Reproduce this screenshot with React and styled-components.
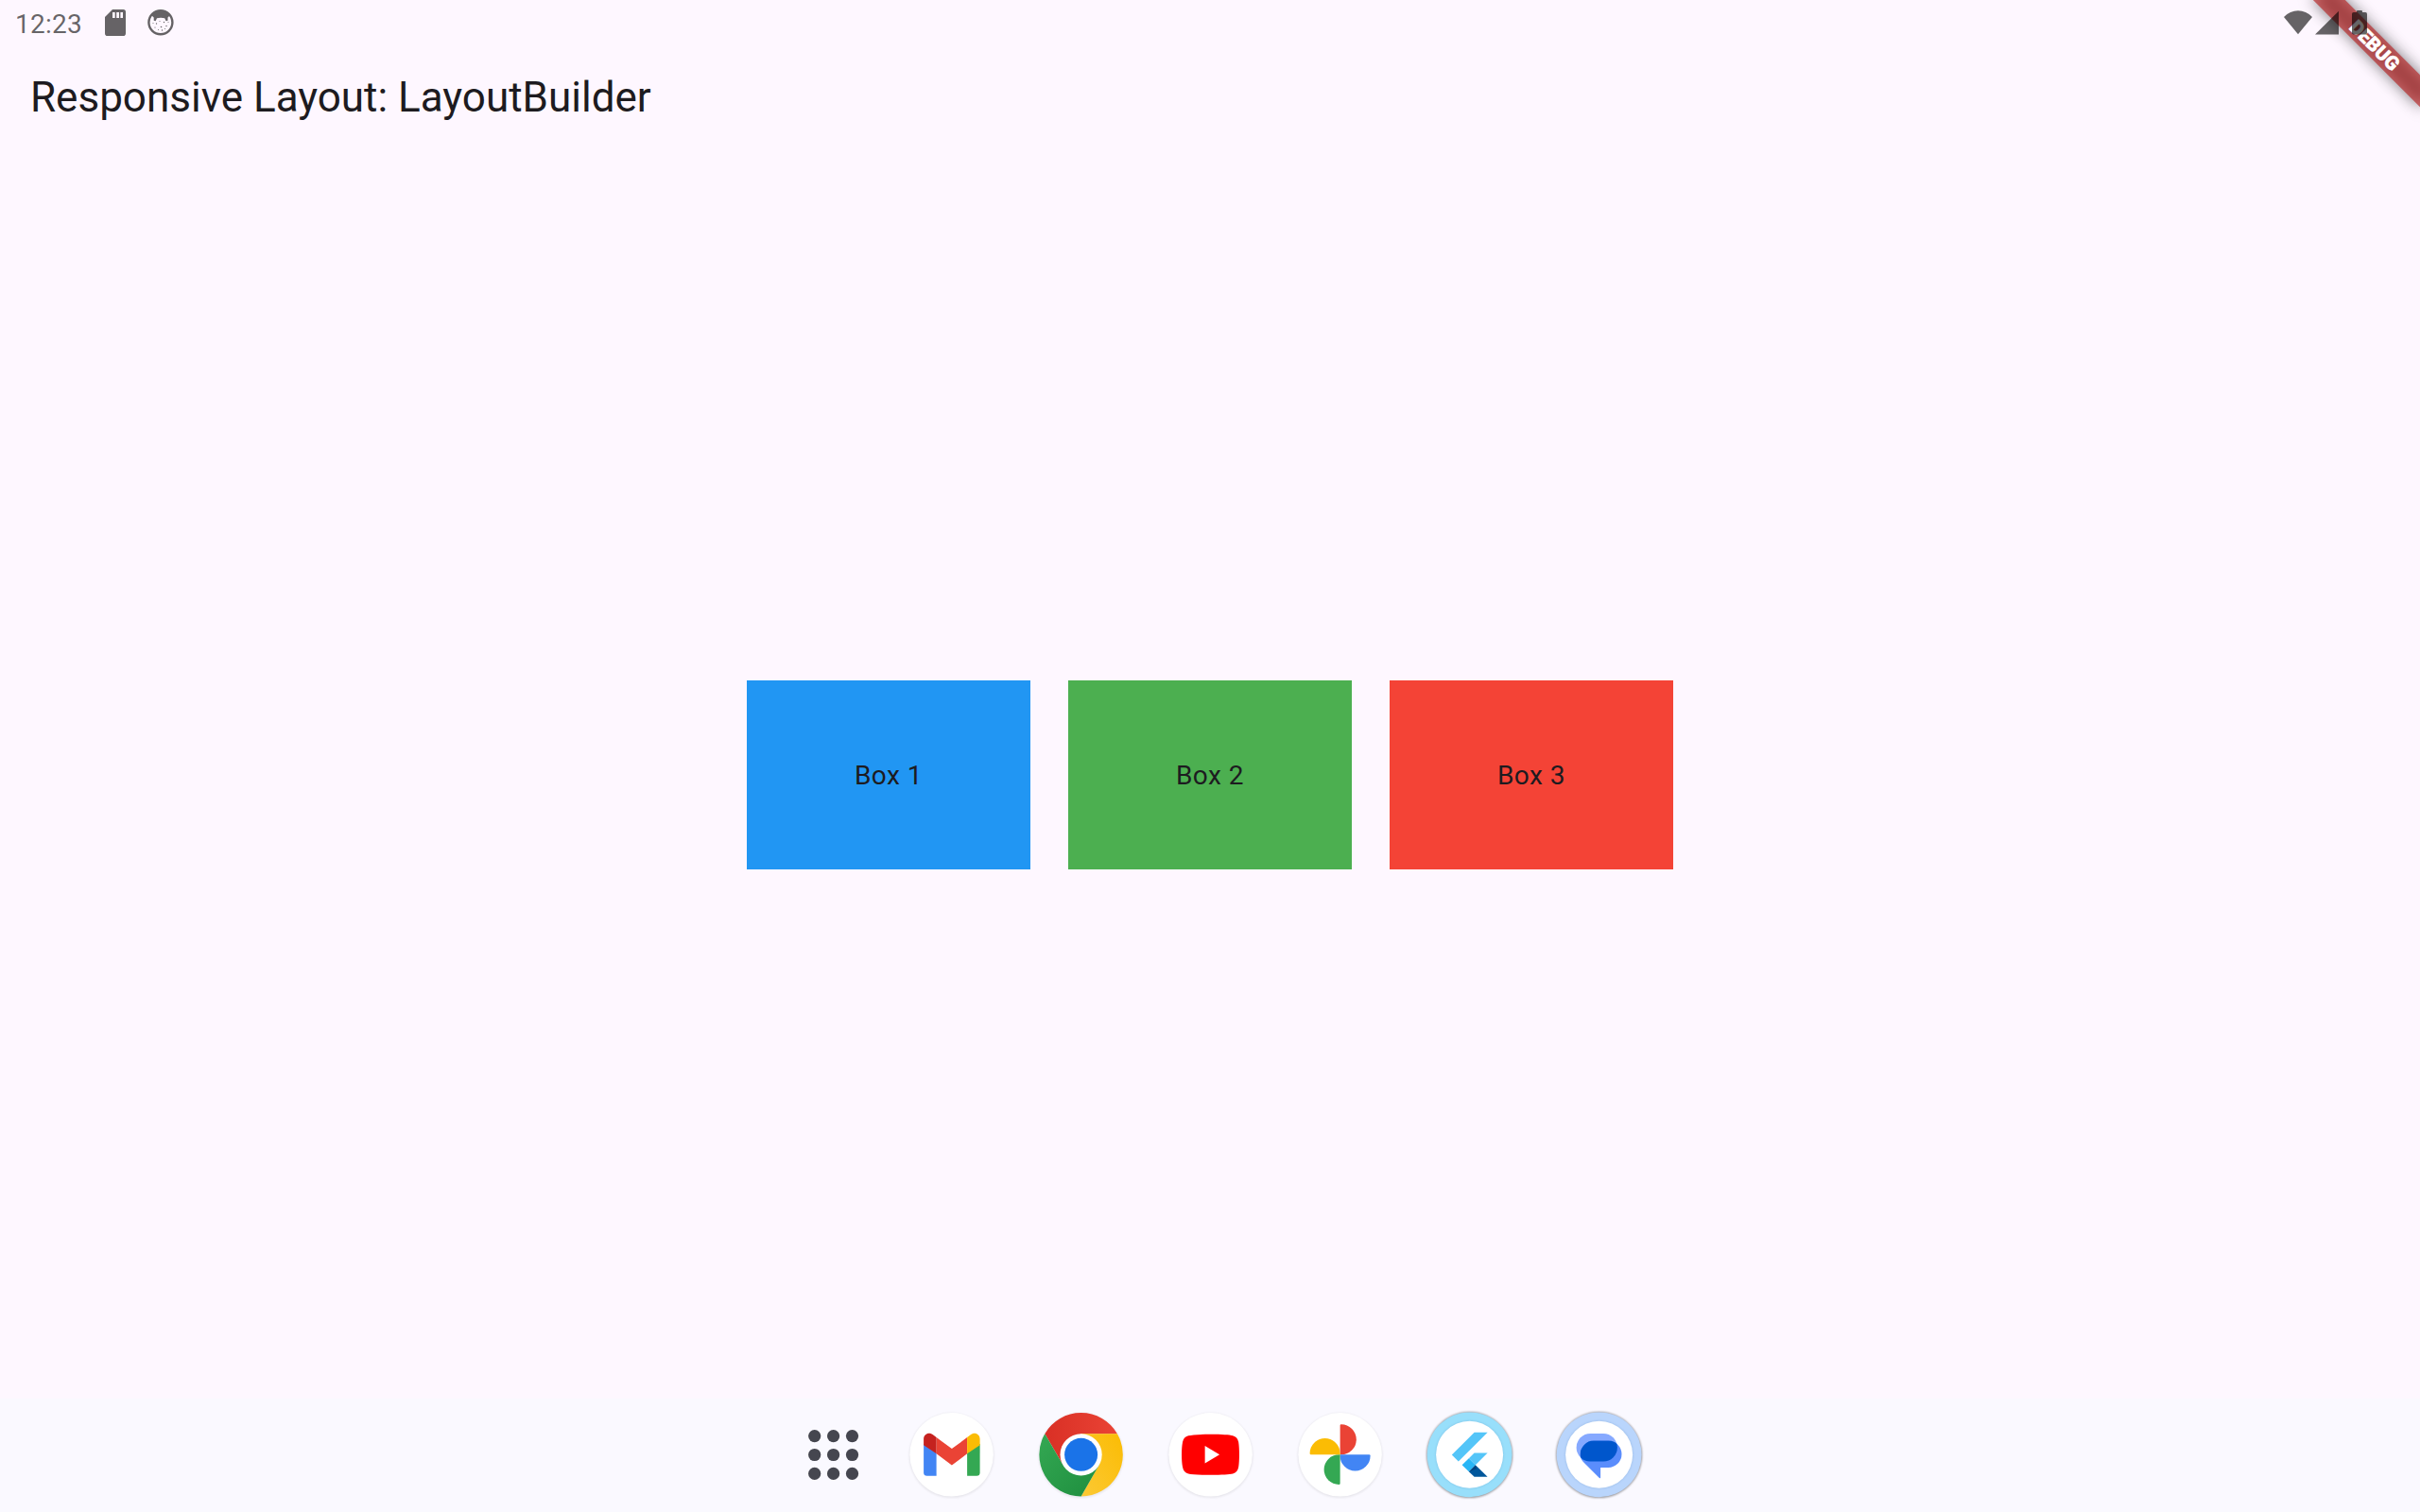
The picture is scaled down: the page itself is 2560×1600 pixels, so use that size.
import React from "react";
import styled, { createGlobalStyle } from "styled-components";

const ink = "rgba(0, 0, 0, 0.6)";

const GlobalStyle = createGlobalStyle`
  *, *::before, *::after { box-sizing: border-box; }
  html, body { margin: 0; padding: 0; overflow: hidden; }
  body { font-family: Roboto, "Liberation Sans", sans-serif; }
  svg { display: block; flex: none; }
`;

const Screen = styled.div`
  position: relative;
  display: flex;
  flex-direction: column;
  width: 2560px;
  height: 1600px;
  overflow: hidden;
  background: #fef7ff;
  color: #1d1b20;
`;

const StatusBar = styled.header`
  position: relative;
  z-index: 2;
  display: flex;
  justify-content: space-between;
  height: 48px;
  padding: 0 56px 0 16px;
`;

const StatusGroup = styled.div`
  display: flex;
  align-items: flex-start;
`;

const Clock = styled.time`
  width: 94px;
  padding-top: 9px;
  font-size: 28px;
  line-height: 33px;
  letter-spacing: 0.25px;
  color: ${ink};
`;

const AppBar = styled.div`
  display: flex;
  align-items: center;
  height: 112px;
  padding: 0 32px 2px;
`;

const Title = styled.h1`
  margin: 0;
  font-size: 44px;
  font-weight: 400;
  line-height: 56px;
  white-space: nowrap;
`;

const Content = styled.main`
  flex: 1;
  display: flex;
  align-items: center;
  justify-content: center;
  gap: 40px;
`;

const Box = styled.div`
  display: flex;
  align-items: center;
  justify-content: center;
  width: 300px;
  height: 200px;
  padding-top: 2px;
  background: ${(p) => p.$color};
  font-size: 28px;
  line-height: 40px;
  letter-spacing: 0.5px;
`;

const Taskbar = styled.nav`
  display: flex;
  align-items: center;
  justify-content: center;
  height: 120px;
  padding-left: 13px;
  background: #faf9ff;
`;

const DrawerButton = styled.div`
  margin-right: 30px;
`;

const AppList = styled.div`
  display: flex;
  gap: 41px;
`;

const AppIcon = styled.svg`
  overflow: visible;
`;

const DebugBanner = styled.div`
  position: absolute;
  z-index: 1;
  top: 0;
  left: 2560px;
  width: 0;
  height: 0;
  transform: rotate(45deg);
`;

const Ribbon = styled.div`
  position: absolute;
  left: -80px;
  top: 56px;
  width: 160px;
  height: 24px;
  background: rgba(183, 28, 28, 0.627);
  color: #fff;
  text-align: center;
  font-size: 20.4px;
  font-weight: 900;
  line-height: 24px;
  -webkit-text-stroke: 0.5px #fff;
`;

const RibbonShadow = styled.div`
  position: absolute;
  left: -80px;
  top: 56px;
  width: 160px;
  height: 24px;
  background: rgba(0, 0, 0, 0.5);
  filter: blur(7.9px);
`;

const SharedFilters = styled.svg`
  position: absolute;
`;

const SdCard = () => (
  <svg width="24" height="48" viewBox="110 0 24 48">
    <path
      fill={ink}
      fillRule="evenodd"
      d="M119 10H130.400Q133 10 133 12.800V35.200Q133 38 130.300 38H113.700Q111 38 111 35.200V18ZM119 13V19H121.700V13ZM123.200 13V19H126V13ZM127.400 13V19H130V13Z"
    />
  </svg>
);

const CatFace = () => (
  <svg width="60" height="48" viewBox="134 0 60 48">
    <g opacity="0.6">
      <circle cx="169.900" cy="23.700" r="12.500" fill="none" stroke="#000" strokeWidth="2.400" />
      <path d="M160 16Q164 11.500 170 11.500T180 16L177.500 18.500V21.800L175.600 22.300L174.200 19.300Q170 18.200 166 19.300L164.600 22.300L162.700 21.800V18.500Z" />
      <g fill="#000">
        <circle cx="165.500" cy="25" r=".7" />
        <circle cx="173.500" cy="23.500" r=".7" />
        <circle cx="169" cy="22.500" r=".5" />
        <circle cx="170.500" cy="28.500" r=".8" />
        <circle cx="176" cy="27.500" r=".7" />
        <circle cx="164" cy="29" r=".6" />
        <circle cx="171.500" cy="32" r=".7" />
        <circle cx="167.500" cy="31.500" r=".5" />
        <circle cx="174.500" cy="30.500" r=".5" />
        <circle cx="178" cy="23.500" r=".5" />
        <circle cx="162" cy="24.500" r=".5" />
      </g>
    </g>
  </svg>
);

const SystemIcons = () => (
  <svg width="92" height="48" viewBox="2412 0 92 48" fill={ink}>
    <path d="M2416 18Q2422.500 11.300 2431 11.300T2446 18L2431 36.300Z" />
    <path d="M2449 36.500L2474 11.800V36.500Z" />
    <path d="M2493 13V12Q2493 11 2494 11H2498Q2499 11 2499 12V13H2502.300Q2504 13 2504 14.700V34.800Q2504 36.600 2502.300 36.600H2489.700Q2488 36.600 2488 34.800V14.700Q2488 13 2489.700 13Z" />
  </svg>
);

const AppsGrid = () => (
  <svg width="96" height="96" viewBox="-48.600 -48 96 96" fill="#45464f">
    {[-19.9, 0, 19.9].map((y) =>
      [-19.9, 0, 19.9].map((x) => <circle key={`${x},${y}`} cx={x} cy={y - 0.5} r="6.600" />)
    )}
  </svg>
);

const Icon = ({ children }) => (
  <AppIcon width="96" height="96" viewBox="-47.600 -47.300 96 96">
    {children}
  </AppIcon>
);

const Disc = () => (
  <>
    <circle r="45" cy="0.8" fill="#000" opacity="0.07" filter="url(#soft)" />
    <circle r="44.200" fill="#fff" />
  </>
);

const RingDisc = ({ color }) => (
  <>
    <circle r="45.500" cy="0.3" fill="#000" opacity="0.4" filter="url(#soft)" />
    <circle r="44.900" fill={color} />
    <circle r="36" fill="#3568a0" opacity="0.18" filter="url(#soft)" />
    <circle r="35.500" fill="#fff" />
  </>
);

const Gmail = () => (
  <Icon>
    <Disc />
    <path fill="#4285f4" d="M-29.500 -11.500L-16 -1.500V22.500H-26Q-29.500 22.500 -29.500 19Z" />
    <path fill="#34a853" d="M30 -11.500L16.500 -1.500V22.500H26.500Q30 22.500 30 19Z" />
    <path fill="#ea4335" d="M-16 -18.200L.3 -6.200L16.500 -18.200V-1L.3 11.200L-16 -1Z" />
    <path fill="#c5221f" d="M-29.500 -10V-16.500C-29.500 -22 -23.500 -24.500 -19.300 -20.700L-16 -18.200V-1Z" />
    <path fill="#fbbc04" d="M30 -10V-16.500C30 -22 24 -24.500 19.800 -20.700L16.500 -18.200V-1Z" />
  </Icon>
);

const Chrome = () => (
  <Icon>
    <defs>
      <linearGradient id="chromeRed" x1="0" x2="1"><stop stopColor="#d93025" /><stop offset="1" stopColor="#ea4335" /></linearGradient>
      <linearGradient id="chromeYellow" x1="0" x2="1" y1="1" y2="0"><stop stopColor="#fcc934" /><stop offset="1" stopColor="#fbbc04" /></linearGradient>
      <linearGradient id="chromeGreen" x1="1" x2="0" y1="1" y2="0"><stop stopColor="#1e8e3e" /><stop offset="1" stopColor="#34a853" /></linearGradient>
    </defs>
    <circle r="45" cy="0.8" fill="#000" opacity="0.07" filter="url(#soft)" />
    <path fill="url(#chromeRed)" d="M-38.300 -22.100A44.200 44.200 0 0 1 38.300 -22.100H0L-19.100 11.050Z" />
    <path fill="url(#chromeYellow)" d="M38.300 -22.100A44.200 44.200 0 0 1 0 44.200L19.100 11.050L0 -22.100Z" />
    <path fill="url(#chromeGreen)" d="M0 44.200A44.200 44.200 0 0 1 -38.300 -22.100L-19.100 11.050L19.100 11.050Z" />
    <circle r="22.100" fill="#fff" />
    <circle r="17.500" fill="#1a73e8" />
  </Icon>
);

const YouTube = () => (
  <Icon>
    <Disc />
    <path fill="#f00" d="M0 -21.500C12 -21.500 20 -21 23.500 -20C27 -19 28.900 -16.800 29.600 -13C30.600 -6 30.600 6 29.600 13C28.900 17 27 19.200 23.500 20.200C20 21.100 12 21.500 0 21.500S-20 21.100 -23.500 20.200C-27 19.200 -28.900 17 -29.600 13C-30.900 6 -30.900 -6 -29.600 -13C-28.900 -16.800 -27 -19 -23.500 -20C-20 -21 -12 -21.500 0 -21.500Z" />
    <path fill="#fff" d="M-6 -9.200L9.500 0L-6 9.200Z" />
  </Icon>
);

const Photos = () => (
  <Icon>
    <Disc />
    <path fill="#ea4335" d="M0 0V-30.800Q0 -32 1.200 -32A16 16 0 0 1 1.200 0Z" />
    <path fill="#4285f4" d="M0 0H30.800Q32 0 32 1.200A16 16 0 0 1 0 1.200Z" />
    <path fill="#34a853" d="M0 0V30.400Q0 31.600 -1.200 31.600A15.800 15.800 0 0 1 -1.200 0Z" />
    <path fill="#fbbc04" d="M0 0H-30.800Q-32 0 -32 -1.200A16 16 0 0 1 0 -1.200Z" />
  </Icon>
);

const Flutter = () => (
  <Icon>
    <RingDisc color="#98dffb" />
    <path fill="#54c5f8" d="M-18.800 .3L5 -23.500H19L-11.800 7.300Z" />
    <path fill="#54c5f8" d="M5 -1.800H19L6.200 11L-.8 4Z" />
    <path fill="#01579b" d="M-.8 18L6.200 11L19 23.500H5Z" />
    <path fill="#29b6f6" d="M-8 11L-.8 4L6.200 11L-.8 18Z" />
    <path fill="#003b76" opacity="0.75" d="M-.8 18L6.200 11L7.500 15Z" />
  </Icon>
);

const Messages = () => (
  <Icon>
    <clipPath id="frontBubble">
      <path d="M-5.500 -14.700H9.700A14.200 14.200 0 0 1 9.700 13.700H-11L-16 8.500Q-20 4.500 -20 0A14.500 14.700 0 0 1 -5.500 -14.700Z" />
    </clipPath>
    <RingDisc color="#b9d5fc" />
    <rect fill="#86a9ff" x="-24" y="-22.300" width="43.300" height="29.600" rx="14.800" />
    <path fill="#5a8dfc" d="M-5.500 -14.700H9.700A14.200 14.200 0 0 1 9.700 13.700H1.500V24.300Q1.500 25.500 .3 24.700L-16 8.500Q-20 4.500 -20 0A14.500 14.700 0 0 1 -5.500 -14.700Z" />
    <rect fill="#0056cc" x="-24" y="-22.300" width="43.300" height="29.600" rx="14.800" clipPath="url(#frontBubble)" />
  </Icon>
);

const boxes = [
  { label: "Box 1", color: "#2196f3" },
  { label: "Box 2", color: "#4caf50" },
  { label: "Box 3", color: "#f44336" },
];

export default function App() {
  return (
    <>
      <GlobalStyle />
      <Screen>
        <SharedFilters width="0" height="0">
          <filter id="soft" x="-20%" y="-20%" width="140%" height="140%">
            <feGaussianBlur stdDeviation="1.2" />
          </filter>
        </SharedFilters>
        <StatusBar>
          <StatusGroup>
            <Clock>12:23</Clock>
            <SdCard />
            <CatFace />
          </StatusGroup>
          <StatusGroup>
            <SystemIcons />
          </StatusGroup>
        </StatusBar>
        <DebugBanner>
          <RibbonShadow />
          <Ribbon>DEBUG</Ribbon>
        </DebugBanner>
        <AppBar>
          <Title>Responsive Layout: LayoutBuilder</Title>
        </AppBar>
        <Content>
          {boxes.map((b) => (
            <Box key={b.label} $color={b.color}>{b.label}</Box>
          ))}
        </Content>
        <Taskbar>
          <DrawerButton>
            <AppsGrid />
          </DrawerButton>
          <AppList>
            <Gmail />
            <Chrome />
            <YouTube />
            <Photos />
            <Flutter />
            <Messages />
          </AppList>
        </Taskbar>
      </Screen>
    </>
  );
}
